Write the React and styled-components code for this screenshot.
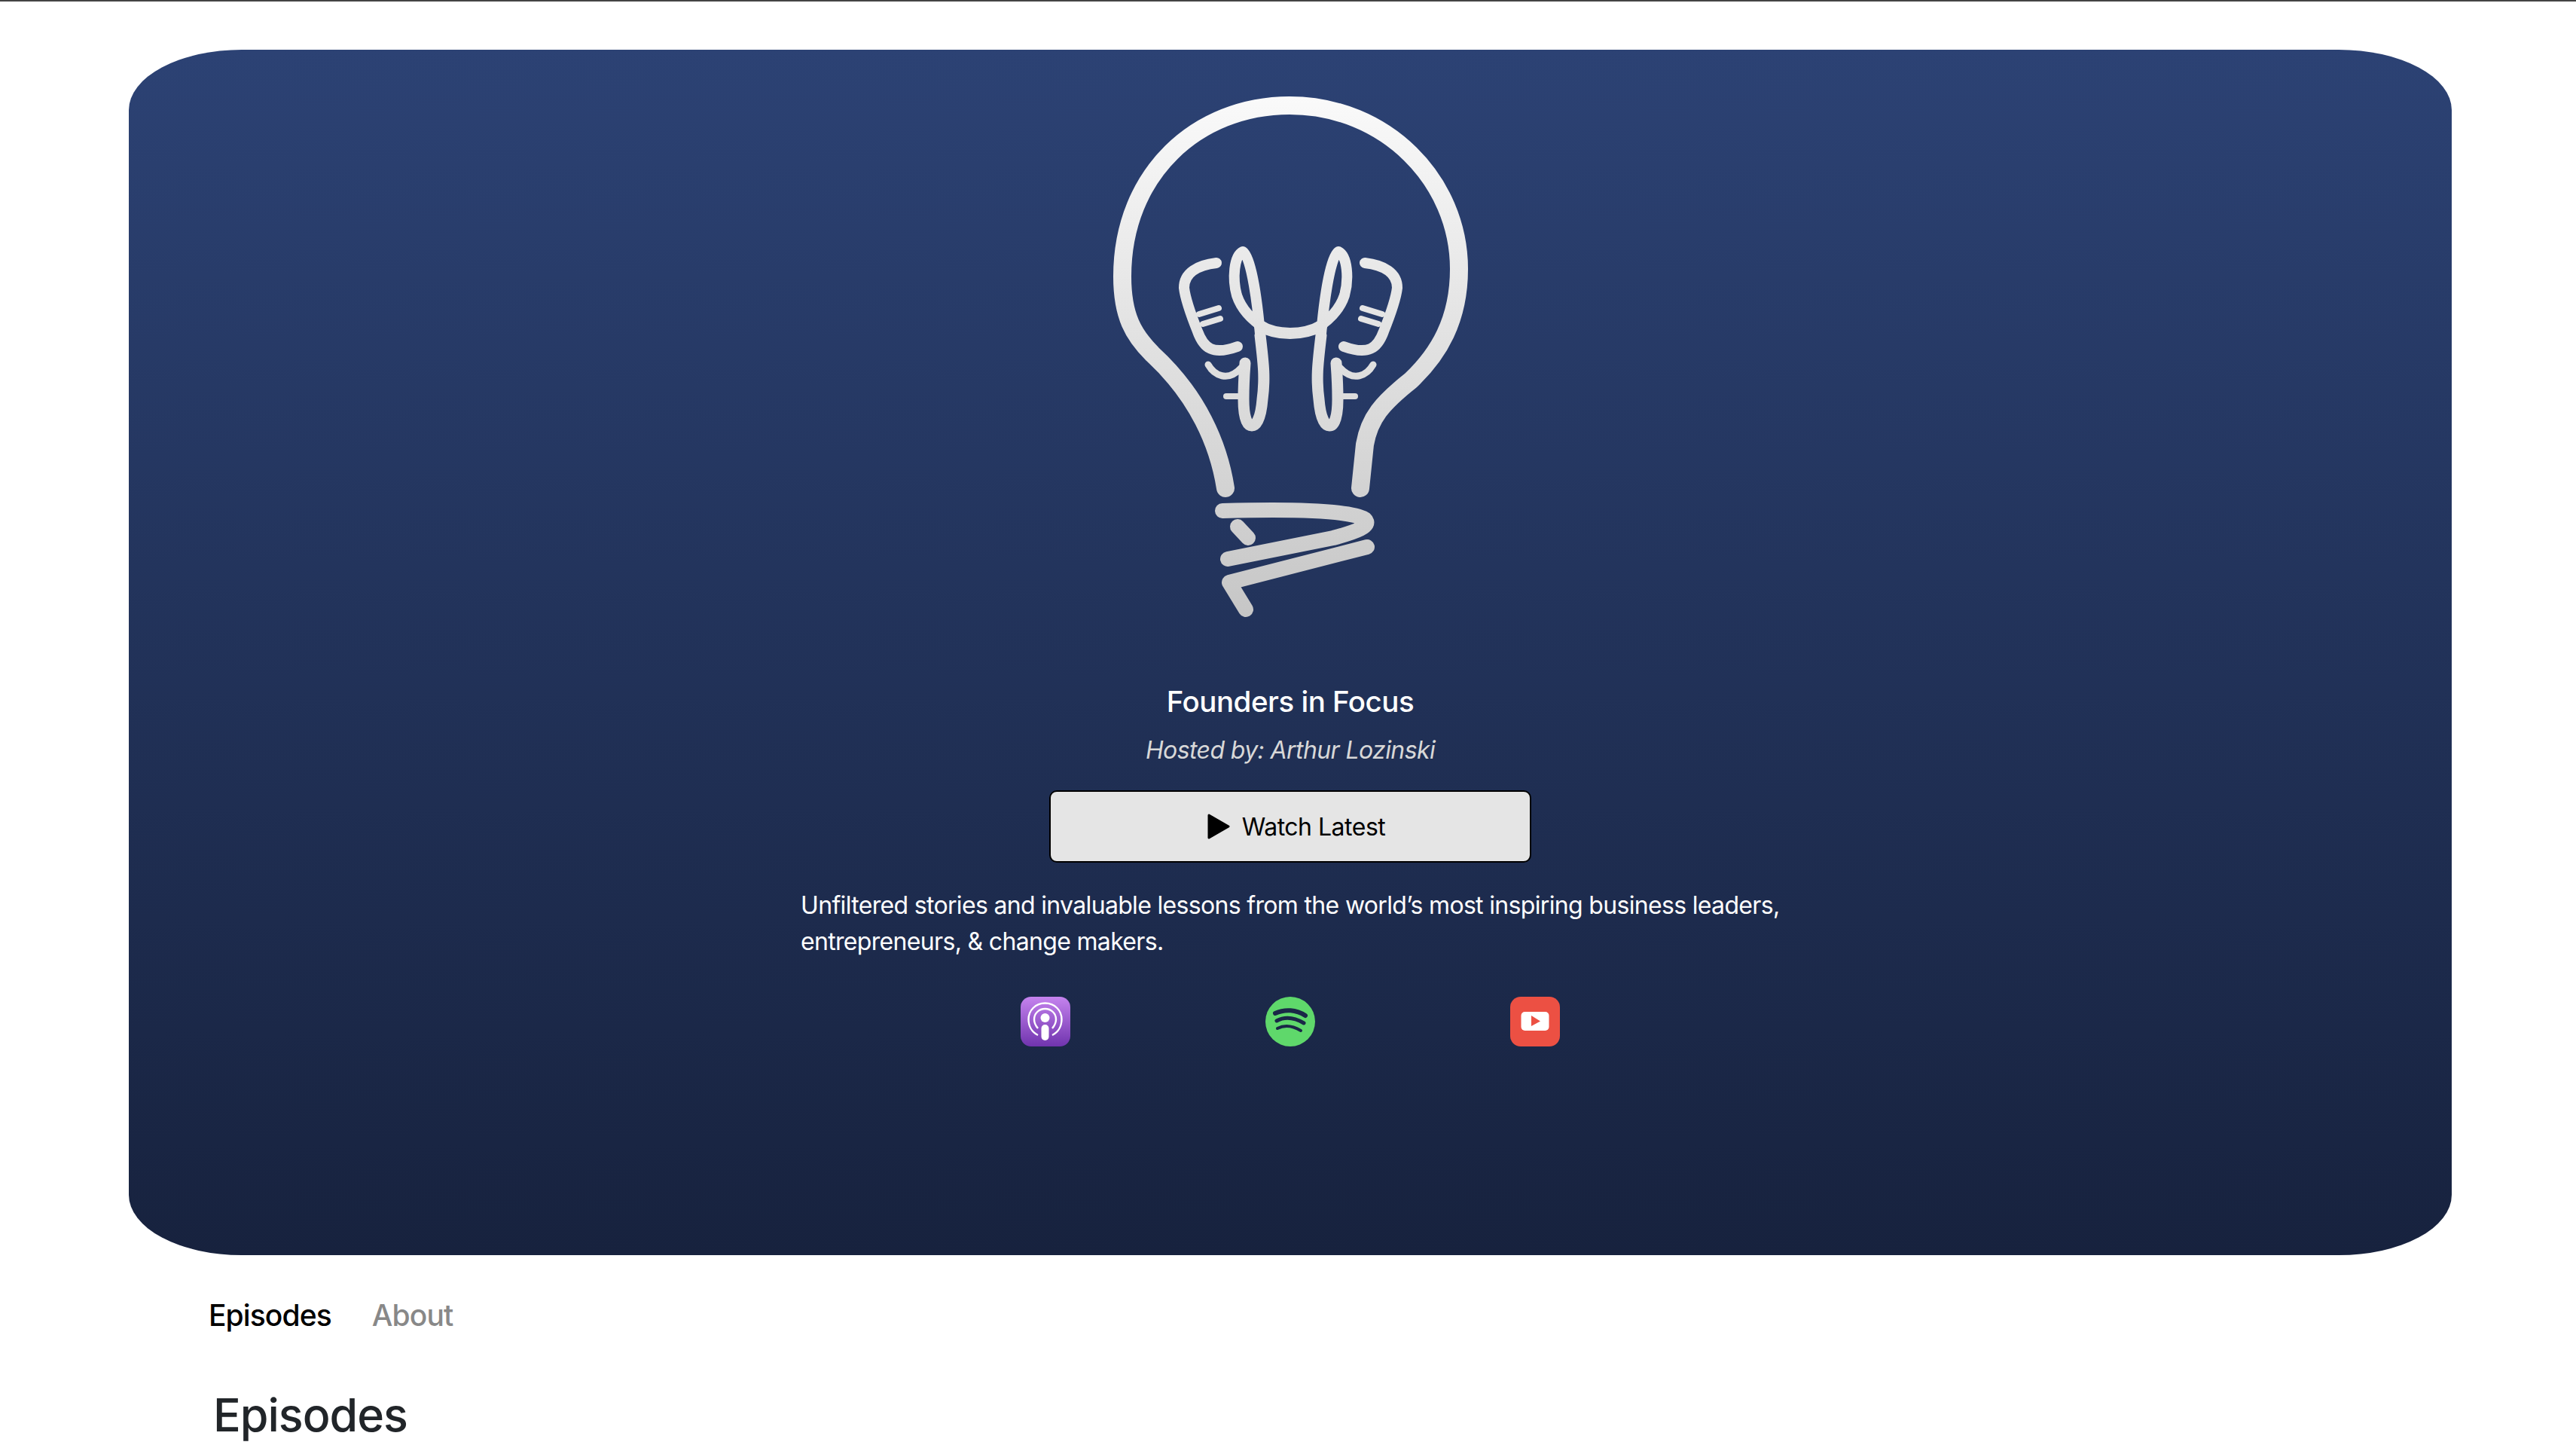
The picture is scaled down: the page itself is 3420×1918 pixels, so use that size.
import React from 'react';
import styled, { createGlobalStyle } from 'styled-components';

const GlobalStyle = createGlobalStyle`
  html, body {
    margin: 0;
    padding: 0;
    background: #fff;
    font-family: Inter, "Liberation Sans", sans-serif;
  }
`;

const Page = styled.div`
  height: 1918px;
  overflow: hidden;
  border-top: 2px solid #444;
  box-sizing: border-box;
`;

const Hero = styled.header`
  margin: 64px 165px 0 171px;
  height: 1600px;
  box-sizing: border-box;
  padding-top: 60px;
  border-radius: 150px / 80px;
  background: linear-gradient(180deg, #2c4274 0%, #17223e 100%);
  display: flex;
  flex-direction: column;
  align-items: center;
`;

const Logo = styled.svg`
  width: 480px;
  height: 720px;
  display: block;
`;

const Title = styled.h1`
  margin: 62px 0 0;
  font-size: 38.5px;
  line-height: 46px;
  font-weight: 500;
  letter-spacing: -0.5px;
  color: #fff;
`;

const Host = styled.p`
  margin: 20px 0 0;
  font-size: 32px;
  line-height: 44px;
  font-style: italic;
  color: #d8d8d8;
  letter-spacing: -0.6px;
`;

const WatchButton = styled.button`
  margin-top: 31px;
  width: 640px;
  height: 96px;
  box-sizing: border-box;
  padding: 0 0 0 16px;
  border: 2px solid #000;
  border-radius: 10px;
  background: #e5e5e5;
  color: #000;
  font-family: inherit;
  font-size: 32px;
  letter-spacing: -0.5px;
  display: flex;
  align-items: center;
  justify-content: center;
  gap: 16px;
`;

const Blurb = styled.p`
  margin: 33px 0 0;
  width: 1300px;
  font-size: 32px;
  line-height: 48px;
  letter-spacing: -0.67px;
  color: #fff;
  white-space: nowrap;
`;

const Platforms = styled.div`
  margin-top: 49px;
  display: flex;
  gap: 259px;
`;

const PlatformIcon = styled.svg`
  width: 66px;
  height: 66px;
  display: block;
`;

const Tabs = styled.nav`
  margin: 56px 0 0 277px;
  display: flex;
  gap: 54px;
`;

const Tab = styled.a`
  font-size: 39px;
  line-height: 48px;
  font-weight: 500;
  letter-spacing: -0.9px;
  color: ${(p) => (p.$active ? '#000' : '#888')};
`;

const SectionTitle = styled.h2`
  margin: 70px 0 0 283px;
  font-size: 61px;
  line-height: 76px;
  font-weight: 500;
  letter-spacing: -1px;
  color: #212529;
`;

function BrainHalf() {
  return (
    <g>
      <path d="M1615 349C1590 352 1572 362 1572 382C1574 400 1584 425 1590 440C1598 462 1610 472 1643 460" strokeWidth="14" />
      <path d="M1592 417L1618 409M1597 430L1620 423" strokeWidth="8" />
      <path d="M1673 443C1670 410 1662 340 1650 334C1638 340 1636 370 1642 392C1648 410 1662 425 1680 436" strokeWidth="14" />
      <path d="M1673 445C1677 480 1680 500 1676 530C1674 555 1668 565 1662 565C1655 565 1651 552 1651 530C1651 510 1652 495 1653 482" strokeWidth="15" />
      <path d="M1604 484C1612 498 1630 508 1648 488" strokeWidth="9" />
      <path d="M1628 526L1645 526" strokeWidth="8" />
    </g>
  );
}

function App() {
  return (
    <Page>
      <GlobalStyle />
      <Hero>
        <Logo viewBox="1473 126 480 720">
          <defs>
            <linearGradient id="bulb" gradientUnits="userSpaceOnUse" x1="0" y1="126" x2="0" y2="820">
              <stop offset="0" stopColor="#fafafa" />
              <stop offset="1" stopColor="#c6c6c6" />
            </linearGradient>
          </defs>
          <g fill="none" stroke="url(#bulb)" strokeLinecap="round" strokeLinejoin="round">
            <path d="M1627 648C1618 590 1590 525 1530 470C1505 445 1490 420 1490 367C1490 230 1590 140 1712 140C1840 140 1937 240 1937 357C1937 425 1910 470 1873 505C1835 535 1818 555 1812 590L1806 648" strokeWidth="24" />
            <BrainHalf />
            <g transform="matrix(-1 0 0 1 3427 0)">
              <BrainHalf />
            </g>
            <path d="M1672 432C1695 446 1730 446 1755 432" strokeWidth="15" />
            <path d="M1623 678C1700 676 1790 676 1812 689C1822 698 1800 706 1770 714L1630 742" strokeWidth="20" />
            <path d="M1643 699L1657 714" strokeWidth="20" />
            <path d="M1815 726L1632 773L1654 809" strokeWidth="20" />
          </g>
        </Logo>
        <Title>Founders in Focus</Title>
        <Host>Hosted by: Arthur Lozinski</Host>
        <WatchButton>
          <svg width="30" height="34" viewBox="0 0 30 34">
            <path d="M2 2L28 17L2 32Z" fill="#000" stroke="#000" strokeWidth="3" strokeLinejoin="round" />
          </svg>
          Watch Latest
        </WatchButton>
        <Blurb>
          Unfiltered stories and invaluable lessons from the world’s most inspiring business leaders,
          <br />
          entrepreneurs, &amp; change makers.
        </Blurb>
        <Platforms>
          <PlatformIcon viewBox="0 0 66 66">
            <defs>
              <linearGradient id="pod" x1="0" y1="0" x2="0" y2="1">
                <stop offset="0" stopColor="#c583ee" />
                <stop offset="1" stopColor="#7034ae" />
              </linearGradient>
            </defs>
            <rect width="66" height="66" rx="14" fill="url(#pod)" />
            <g fill="none" stroke="#fff" strokeWidth="2.4">
              <path d="M23 51C15 47 10.500 39 10.500 30C10.500 18 20 8.500 32.500 8.500C45 8.500 54.500 18 54.500 30C54.500 39 50 47 42 51" />
              <path d="M23 42C20 38.500 18 34.500 18 30C18 22 24.500 16 32.500 16C40.500 16 47 22 47 30C47 34.500 45 38.500 42 42" />
            </g>
            <circle cx="32.500" cy="28" r="6" fill="#fff" />
            <rect x="27.500" y="37" width="10" height="21" rx="5" fill="#fff" />
          </PlatformIcon>
          <PlatformIcon viewBox="0 0 66 66">
            <circle cx="33" cy="33" r="33" fill="#5fd86b" />
            <g fill="none" stroke="#1a2747" strokeLinecap="round">
              <path d="M13 22C26 16 41 17 53 25" strokeWidth="6" />
              <path d="M15 32C26 26 39 28 51 35" strokeWidth="5" />
              <path d="M16 42C26 37 37 39 47 45" strokeWidth="4" />
            </g>
          </PlatformIcon>
          <PlatformIcon viewBox="0 0 66 66">
            <rect width="66" height="66" rx="14" fill="#ec5043" />
            <rect x="14.500" y="20" width="37" height="25" rx="5" fill="#fff" />
            <path d="M28 25L40 32.500L28 39Z" fill="#ec5043" />
          </PlatformIcon>
        </Platforms>
      </Hero>
      <Tabs>
        <Tab $active>Episodes</Tab>
        <Tab>About</Tab>
      </Tabs>
      <SectionTitle>Episodes</SectionTitle>
    </Page>
  );
}

export default App;
